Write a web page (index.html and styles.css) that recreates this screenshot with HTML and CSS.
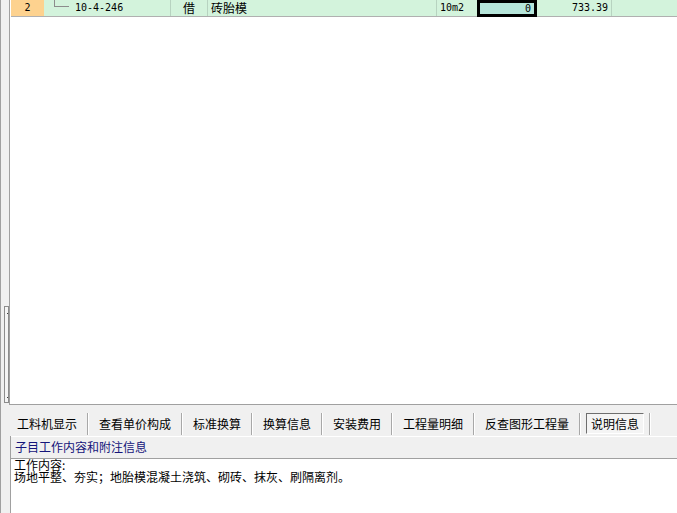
FILE: index.html
```html
<!DOCTYPE html>
<html lang="zh-CN">
<head>
<meta charset="utf-8">
<title>说明信息</title>
<link rel="stylesheet" href="styles.css">
</head>
<body>
<div class="app">
  <div class="top">
    <div class="vscroll"><div class="thumb"><span class="dot"></span><span class="dot"></span></div></div>
    <div class="grid">
      <div class="row">
        <div class="cell num">2</div>
        <div class="cell code"><span class="elbow"></span><span class="mono">10-4-246</span></div>
        <div class="cell kind">借</div>
        <div class="cell name">砖胎模</div>
        <div class="cell unit mono">10m2</div>
        <div class="cell qty mono">0</div>
        <div class="cell price mono">733.39</div>
        <div class="cell rest"></div>
      </div>
    </div>
  </div>
  <div class="bottom">
    <div class="tabs">
      <div class="tab">工料机显示</div>
      <div class="tab">查看单价构成</div>
      <div class="tab">标准换算</div>
      <div class="tab">换算信息</div>
      <div class="tab">安装费用</div>
      <div class="tab">工程量明细</div>
      <div class="tab">反查图形工程量</div>
      <div class="tab tab-active"><span class="active-box">说明信息</span></div>
    </div>
    <div class="info">
      <div class="info-head">子目工作内容和附注信息</div>
      <div class="info-body">
        <div class="line">工作内容:</div>
        <div class="line">场地平整、夯实；地胎模混凝土浇筑、砌砖、抹灰、刷隔离剂。</div>
      </div>
    </div>
  </div>
</div>
</body>
</html>
```

FILE: styles.css
```css
html, body {
  margin: 0;
  padding: 0;
}
body {
  width: 677px;
  height: 513px;
  overflow: hidden;
  background: #f0f0f0;
  font-family: "Noto Sans CJK SC", "Liberation Sans", sans-serif;
  font-size: 12px;
  color: #000;
}
.app {
  display: flex;
  flex-direction: column;
  height: 513px;
  border-left: 1px solid #a0a0a0;
  box-sizing: border-box;
}
.top {
  display: flex;
  height: 405px;
  flex: none;
}
.vscroll {
  width: 8px;
  display: flex;
  flex-direction: column;
  justify-content: flex-end;
  padding-bottom: 2px;
  box-sizing: border-box;
}
.thumb {
  width: 5px;
  height: 97px;
  margin-left: 3px;
  box-sizing: border-box;
  border: 1px solid #8c8c8c;
  background: #f4f4f4;
  display: flex;
  flex-direction: column;
  justify-content: space-between;
  align-items: flex-end;
  padding: 6px 0 4px;
}
.dot {
  width: 1px;
  height: 1px;
  background: #404040;
}
.grid {
  flex: 1;
  background: #fff;
  border-left: 1px solid #a0a0a0;
  border-bottom: 1px solid #a0a0a0;
  padding-left: 1px;
}
.row {
  display: flex;
  height: 16px;
  background: #d3f3dc;
  border-bottom: 1px solid #b0b0b0;
}
.cell {
  height: 16px;
  line-height: 16px;
  box-sizing: border-box;
  white-space: nowrap;
  border-right: 1px solid #b7d3c0;
}
.mono {
  font-family: "DejaVu Sans Mono", "Liberation Mono", monospace;
  font-size: 10px;
}
.num {
  width: 33px;
  background: #fdd28f;
  text-align: center;
  border-right: none;
  font-family: "DejaVu Sans Mono", monospace;
  font-size: 10px;
}
.code {
  width: 127px;
  display: flex;
  align-items: flex-start;
  padding-left: 10px;
}
.elbow {
  width: 15px;
  height: 7px;
  box-sizing: border-box;
  border-left: 1px solid #8c8c8c;
  border-bottom: 1px solid #8c8c8c;
  margin-right: 6px;
}
.kind {
  width: 37px;
  padding-left: 12px;
}
.name {
  width: 229px;
  padding-left: 3px;
}
.unit {
  width: 40px;
  padding-left: 3px;
  border-right: none;
}
.qty {
  width: 60px;
  height: 17px;
  margin-bottom: -1px;
  border: 3px solid #000;
  background: #b6e5da;
  text-align: right;
  padding-right: 3px;
  line-height: 11px;
}
.price {
  width: 75px;
  text-align: right;
  padding-right: 3px;
}
.rest {
  flex: 1;
  border-right: none;
}
.bottom {
  flex: 1;
  display: flex;
  flex-direction: column;
}
.tabs {
  display: flex;
  height: 31px;
  padding: 8px 0 0 5px;
  box-sizing: border-box;
}
.tab {
  height: 22px;
  line-height: 22px;
  padding: 0 10px 0 11px;
  border-right: 1px solid #a8a8a8;
  box-shadow: 1px 0 0 #fff;
  white-space: nowrap;
}
.tab-active {
  padding: 0 5px 0 6px;
}
.active-box {
  display: block;
  height: 21px;
  line-height: 20px;
  padding: 0 4px;
  border-top: 1px solid #6e6e6e;
  border-left: 1px solid #6e6e6e;
  border-right: 1px solid #ffffff;
  border-bottom: 1px solid #ffffff;
  box-sizing: border-box;
  background: #f4f4f4;
}
.info {
  flex: 1;
  display: flex;
  flex-direction: column;
  margin-left: 9px;
  border-left: 1px solid #a0a0a0;
}
.info-head {
  height: 23px;
  box-sizing: border-box;
  border-top: 1px solid #fff;
  border-bottom: 1px solid #a0a0a0;
  line-height: 20px;
  padding-left: 4px;
  color: #15157a;
  background: #f0f0f0;
}
.info-body {
  flex: 1;
  background: #fff;
  padding: 0 0 0 3px;
}
.line {
  line-height: 12px;
  height: 12px;
  white-space: nowrap;
}
```
